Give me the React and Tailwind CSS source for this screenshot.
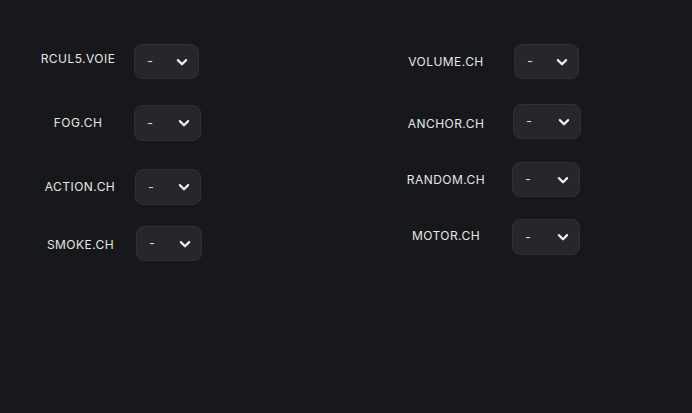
import React from "react";

function Chevron() {
  return (
    <svg width="18" height="18" viewBox="0 0 24 24" fill="none" stroke="#f2f2f2" strokeWidth="2.9" strokeLinecap="round" strokeLinejoin="round">
      <path d="M6.5 9.5l5.5 5.5 5.5-5.5" />
    </svg>
  );
}

function Box({ cls }) {
  return (
    <div className={"flex items-center justify-between rounded-lg border border-[#2f3135] bg-[#25272b] pl-[12px] pr-[7px] " + cls}>
      <span className="text-[13px] text-[#d6d6d6] leading-none">-</span>
      <Chevron />
    </div>
  );
}

const label = "w-[80px] shrink-0 text-center text-[12px] font-normal tracking-[0.45px] text-[#e6e6e6] leading-none whitespace-nowrap";

export default function App() {
  return (
    <div className="w-[692px] h-[413px] bg-[#17181b] flex items-start" style={{ fontFamily: "Inter, 'Noto Sans', sans-serif" }}>
      <div className="ml-[38px] w-[200px] pt-[44px] flex flex-col">
        <div className="flex items-center">
          <div className={label + " mb-[5px]"}>RCUL5.VOIE</div>
          <Box cls="ml-[16px] w-[65px] h-[35px]" />
        </div>
        <div className="flex items-center mt-[26px]">
          <div className={label}>FOG.CH</div>
          <Box cls="ml-[16px] w-[67px] h-[36px]" />
        </div>
        <div className="flex items-center mt-[28px]">
          <div className={label + " pl-[4px]"}>ACTION.CH</div>
          <Box cls="ml-[17px] w-[66px] h-[36px]" />
        </div>
        <div className="flex items-center mt-[21px]">
          <div className={label + " pl-[5px] mt-[3px]"}>SMOKE.CH</div>
          <Box cls="ml-[18px] w-[66px] h-[35px]" />
        </div>
      </div>
      <div className="ml-[168px] w-[200px] pt-[44px] flex flex-col">
        <div className="flex items-center">
          <div className={label}>VOLUME.CH</div>
          <Box cls="ml-[28px] w-[65px] h-[35px]" />
        </div>
        <div className="flex items-center mt-[25px]">
          <div className={label + " mt-[5px]"}>ANCHOR.CH</div>
          <Box cls="ml-[27px] w-[68px] h-[35px]" />
        </div>
        <div className="flex items-center mt-[23px]">
          <div className={label}>RANDOM.CH</div>
          <Box cls="ml-[26px] w-[68px] h-[35px]" />
        </div>
        <div className="flex items-center mt-[22px]">
          <div className={label + " mb-[2px]"}>MOTOR.CH</div>
          <Box cls="ml-[26px] w-[68px] h-[36px]" />
        </div>
      </div>
    </div>
  );
}
